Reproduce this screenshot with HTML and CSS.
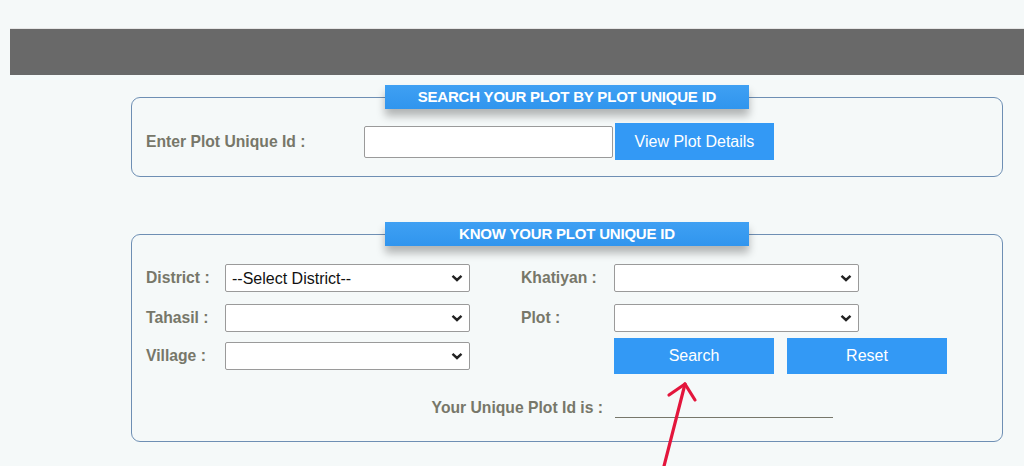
FILE: index.html
```html
<!DOCTYPE html>
<html lang="en">
<head>
<meta charset="utf-8">
<title>Plot Unique Id</title>
<link rel="stylesheet" href="styles.css">
</head>
<body>
<div class="topbar"></div>
<main class="content">
  <section class="box box-search">
    <h2 class="box-title">SEARCH YOUR PLOT BY PLOT UNIQUE ID</h2>
    <div class="search-row">
      <label class="lbl lbl-wide" for="pid">Enter Plot Unique Id :</label>
      <input class="text-input" id="pid" type="text">
      <button class="btn btn-view" type="button">View Plot Details</button>
    </div>
  </section>

  <section class="box box-know">
    <h2 class="box-title">KNOW YOUR PLOT UNIQUE ID</h2>
    <div class="form-grid">
      <label class="lbl c1" for="district">District :</label>
      <select class="sel c2" id="district"><option>--Select District--</option></select>
      <label class="lbl c4" for="khatiyan">Khatiyan :</label>
      <select class="sel c5" id="khatiyan"><option></option></select>

      <label class="lbl c1" for="tahasil">Tahasil :</label>
      <select class="sel c2" id="tahasil"><option></option></select>
      <label class="lbl c4" for="plot">Plot :</label>
      <select class="sel c5" id="plot"><option></option></select>

      <label class="lbl c1 mid" for="village">Village :</label>
      <select class="sel c2 mid" id="village"><option></option></select>
      <div class="btn-row">
        <button class="btn btn-act" type="button">Search</button>
        <button class="btn btn-act" type="button">Reset</button>
      </div>

      <div class="result-label">Your Unique Plot Id is :</div>
      <div class="result-line"></div>
    </div>
  </section>
</main>
<svg class="arrow" width="60" height="100" viewBox="640 370 60 100" aria-hidden="true">
  <path d="M663 470 L685 384" fill="none" stroke="#e3163c" stroke-width="3.2" stroke-linecap="round"/>
  <path d="M669 395 L685 384 L695 400" fill="none" stroke="#e3163c" stroke-width="3.2" stroke-linecap="round" stroke-linejoin="round"/>
</svg>
</body>
</html>
```

FILE: styles.css
```css
html, body {
  margin: 0;
  padding: 0;
}
body {
  background: #f5f9f9;
  font-family: "Liberation Sans", Arial, sans-serif;
  width: 1024px;
  height: 466px;
  overflow: hidden;
  position: relative;
}
.topbar {
  margin: 28px 0 0 10px;
  height: 47px;
  background: #696969;
  border-top: 1px solid #e6e6e6;
  box-sizing: border-box;
}
.content {
  padding-left: 131px;
  padding-top: 0;
  display: flow-root;
}
.box {
  width: 872px;
  box-sizing: border-box;
  border: 1px solid #6e8fb4;
  border-radius: 9px;
  padding: 0;
}
.box-title {
  margin: -13px 0 0 239px;
  width: 364px;
  height: 24px;
  box-sizing: border-box;
  padding: 0;
  background: linear-gradient(#3fa0f3, #3095ee);
  color: #fff;
  font-weight: bold;
  font-size: 15px;
  line-height: 24px;
  text-align: center;
  box-shadow: 0 7px 9px rgba(0, 0, 0, 0.28);
  letter-spacing: -0.2px;
}
.box-search {
  margin-top: 22px;
  padding: 0 0 16px 14px;
}
.search-row {
  display: flex;
  align-items: center;
  height: 37px;
  margin-top: 14px;
}
.lbl {
  color: #777769;
  font-weight: bold;
  font-size: 15.7px;
  line-height: 28px;
}
.lbl-wide {
  width: 218px;
}
.text-input {
  width: 249px;
  height: 32px;
  box-sizing: border-box;
  border: 1px solid #9a9a9a;
  border-radius: 2px;
  background: #fff;
  margin: 0;
  padding: 0 6px;
  font-size: 15px;
}
.btn {
  background: #3399f5;
  color: #fff;
  border: none;
  border-radius: 0;
  font-family: "Liberation Sans", Arial, sans-serif;
  font-size: 16px;
  padding: 0;
  margin: 0;
}
.btn-view {
  width: 159px;
  height: 37px;
  margin-left: 2px;
}
.box-know {
  margin-top: 57px;
  padding: 0 0 23px 14px;
}
.form-grid {
  display: grid;
  grid-template-columns: 79px 245px 51px 93px 245px 1fr;
  grid-template-rows: 40px 34px 36px auto;
  margin-top: 18px;
}
.c1 { grid-column: 1; }
.c2 { grid-column: 2; }
.c4 { grid-column: 4; }
.c5 { grid-column: 5; }
.form-grid .lbl {
  align-self: start;
}
.form-grid .lbl.mid {
  align-self: center;
}
.sel {
  appearance: none;
  -webkit-appearance: none;
  align-self: start;
  height: 28px;
  width: 245px;
  box-sizing: border-box;
  border: 1px solid #9a9a9a;
  border-radius: 2px;
  background-color: #fff;
  background-image: url("data:image/svg+xml,%3Csvg xmlns='http://www.w3.org/2000/svg' width='12' height='8' viewBox='0 0 12 8'%3E%3Cpath d='M1.5 1.8 L6 6 L10.5 1.8' fill='none' stroke='%23222' stroke-width='2.4'/%3E%3C/svg%3E");
  background-repeat: no-repeat;
  background-position: right 6px center;
  background-size: 12px 8px;
  color: #111;
  font-family: "Liberation Sans", Arial, sans-serif;
  font-size: 16px;
  padding: 0 22px 0 6px;
  margin: 0;
}
.sel.mid {
  align-self: center;
}
.btn-row {
  grid-column: 5 / 7;
  display: flex;
  gap: 13px;
}
.btn-act {
  width: 160px;
  height: 36px;
}
.result-label {
  grid-column: 1 / 5;
  justify-self: end;
  padding-right: 11px;
  margin-top: 24px;
  line-height: 20px;
  color: #777769;
  font-weight: bold;
  font-size: 15.7px;
}
.result-line {
  grid-column: 5;
  margin-top: 24px;
  width: 218px;
  height: 19px;
  border-bottom: 1.5px solid #77776b;
  margin-left: 1px;
}
.arrow {
  position: absolute;
  left: 640px;
  top: 370px;
  overflow: visible;
}
```
